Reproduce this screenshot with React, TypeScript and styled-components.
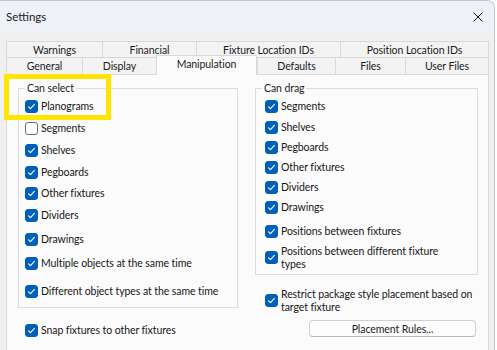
import React from "react";
import styled, { createGlobalStyle } from "styled-components";

const Global = createGlobalStyle`
  html, body { margin: 0; padding: 0; background: #ffffff; }
  body {
    font-family: Lato, "Liberation Sans", sans-serif;
    font-size: 10.5px;
    letter-spacing: -0.08px;
    color: #161616;
    overflow: hidden;
  }
`;

const Window = styled.div`
  position: relative;
  width: 495px;
  height: 360px;
  box-sizing: border-box;
  background: #f0f0f0;
  border-top: 1px solid #c3c6ca;
  border-right: 1px solid #c3c6ca;
  border-top-right-radius: 8px;
  overflow: hidden;
  display: flex;
  flex-direction: column;
`;

const TitleBar = styled.div`
  height: 31px;
  flex: none;
  background: #eef2f6;
  display: flex;
  align-items: center;
  justify-content: space-between;
  padding: 0 8px 0 6px;
`;

const Title = styled.span`
  font-size: 11.5px;
  letter-spacing: 0;
  color: #1b1b1b;
`;

const CloseButton = styled.button`
  width: 16px;
  height: 16px;
  padding: 0;
  border: 0;
  background: transparent;
  display: flex;
  align-items: center;
  justify-content: center;
`;

const Body = styled.div`
  padding: 9px 0 0 6px;
  display: flex;
  flex-direction: column;
`;

const TabRow = styled.div`
  display: flex;
  height: ${(p: { $h: number }) => p.$h}px;
`;

const Tab = styled.div<{ $w: number; $last?: boolean; $selected?: boolean }>`
  width: ${(p) => p.$w}px;
  box-sizing: border-box;
  flex: none;
  border-top: 1px solid #d9d9d9;
  border-left: 1px solid #d9d9d9;
  border-right: ${(p) => (p.$last ? "1px solid #d9d9d9" : "0")};
  background: ${(p) => (p.$selected ? "#fbfbfb" : "#f3f3f3")};
  display: flex;
  align-items: center;
  justify-content: center;
  color: #1b1b1b;
  ${(p) =>
    p.$selected
      ? `
    position: relative;
    z-index: 1;
    height: 20px;
    margin-top: -2px;
    border-right: 1px solid #d9d9d9;
    padding-bottom: 3px;
  `
      : ""}
`;

const Pane = styled.div`
  width: 483px;
  height: 300px;
  box-sizing: border-box;
  border: 1px solid #d9d9d9;
  background: #fbfbfb;
  padding: 6px 0 0 11px;
  display: grid;
  grid-template-columns: 220px 223px;
  column-gap: 17px;
  align-items: start;
`;

const Column = styled.div<{ $pl?: number }>`
  display: flex;
  flex-direction: column;
  align-items: flex-start;
  padding-left: ${(p) => p.$pl ?? 0}px;
`;

const Group = styled.fieldset<{ $pl: number; $pb: number }>`
  margin: 0;
  min-width: 0;
  align-self: stretch;
  box-sizing: border-box;
  border: 1px solid #dcdcdc;
  padding: 3px 4px ${(p) => p.$pb}px ${(p) => p.$pl}px;
  display: flex;
  flex-direction: column;
`;

const Legend = styled.legend<{ $ml?: number }>`
  padding: 0 2px;
  margin-left: ${(p) => p.$ml ?? 0}px;
  line-height: 14px;
  color: #1b1b1b;
`;

const Item = styled.label<{ $mt?: number }>`
  display: flex;
  align-items: center;
  gap: 3px;
  margin-top: ${(p) => p.$mt ?? 0}px;
  min-height: 16px;
  line-height: 12.5px;
`;

const ItemText = styled.span<{ $w?: number }>`
  ${(p) => (p.$w ? `max-width: ${p.$w}px;` : "")}
  white-space: ${(p) => (p.$w ? "normal" : "nowrap")};
`;

const Box = styled.span<{ $on: boolean }>`
  width: 13px;
  height: 13px;
  flex: none;
  box-sizing: border-box;
  border-radius: 3px;
  background: ${(p) => (p.$on ? "#005fb8" : "#fdfdfd")};
  border: 1px solid ${(p) => (p.$on ? "#005fb8" : "#6f6f6f")};
  display: flex;
  align-items: center;
  justify-content: center;
`;

const PushButton = styled.button`
  margin: 7px 0 0 44px;
  width: 167px;
  height: 17px;
  box-sizing: border-box;
  padding: 0;
  border: 1px solid #d0d0d0;
  border-bottom-color: #b8b8b8;
  border-radius: 4px;
  background: #fdfdfd;
  font-family: inherit;
  font-size: inherit;
  letter-spacing: inherit;
  color: #1b1b1b;
`;

const Highlight = styled.div`
  position: absolute;
  left: 4px;
  top: 73px;
  width: 107px;
  height: 46px;
  box-sizing: border-box;
  border: 5px solid #ffe500;
  pointer-events: none;
`;

function Check({ on = true, label, mt, w }: { on?: boolean; label: string; mt?: number; w?: number }) {
  return (
    <Item $mt={mt}>
      <Box $on={on}>
        {on && (
          <svg width="9" height="9" viewBox="0 0 9 9">
            <path d="M1.6 4.8 L3.5 6.6 L7.4 2.4" fill="none" stroke="#ffffff" strokeWidth="1.1" strokeLinecap="round" strokeLinejoin="round" />
          </svg>
        )}
      </Box>
      <ItemText $w={w}>{label}</ItemText>
    </Item>
  );
}

export default function App() {
  return (
    <>
      <Global />
      <Window>
        <TitleBar>
          <Title>Settings</Title>
          <CloseButton aria-label="Close">
            <svg width="10" height="10" viewBox="0 0 10 10">
              <path d="M0.5 0.5 L9.5 9.5 M9.5 0.5 L0.5 9.5" stroke="#1b1b1b" strokeWidth="1" />
            </svg>
          </CloseButton>
        </TitleBar>
        <Body>
          <TabRow $h={16}>
            <Tab $w={96}>Warnings</Tab>
            <Tab $w={94}>Financial</Tab>
            <Tab $w={144}>Fixture Location IDs</Tab>
            <Tab $w={149} $last>Position Location IDs</Tab>
          </TabRow>
          <TabRow $h={17}>
            <Tab $w={76}>General</Tab>
            <Tab $w={74}>Display</Tab>
            <Tab $w={101} $selected>Manipulation</Tab>
            <Tab $w={78}>Defaults</Tab>
            <Tab $w={70}>Files</Tab>
            <Tab $w={84} $last>User Files</Tab>
          </TabRow>
          <Pane>
            <Column>
              <Group $pl={6} $pb={8}>
                <Legend>Can select</Legend>
                <Check label="Planograms" />
                <Check label="Segments" on={false} mt={6} />
                <Check label="Shelves" mt={6} />
                <Check label="Pegboards" mt={6} />
                <Check label="Other fixtures" mt={5} />
                <Check label="Dividers" mt={6} />
                <Check label="Drawings" mt={8} />
                <Check label="Multiple objects at the same time" mt={8} />
                <Check label="Different object types at the same time" mt={12} />
              </Group>
              <Column $pl={7}>
                <Check label="Snap fixtures to other fixtures" mt={14} />
              </Column>
            </Column>
            <Column>
              <Group $pl={9} $pb={4}>
                <Legend $ml={-3}>Can drag</Legend>
                <Check label="Segments" />
                <Check label="Shelves" mt={5} />
                <Check label="Pegboards" mt={4} />
                <Check label="Other fixtures" mt={4} />
                <Check label="Dividers" mt={4} />
                <Check label="Drawings" mt={4} />
                <Check label="Positions between fixtures" mt={8} />
                <Check label="Positions between different fixture types" mt={6} w={168} />
              </Group>
              <Column $pl={10}>
                <Check label="Restrict package style placement based on target fixture" mt={13} w={200} />
                <PushButton>Placement Rules...</PushButton>
              </Column>
            </Column>
          </Pane>
        </Body>
        <Highlight />
      </Window>
    </>
  );
}
